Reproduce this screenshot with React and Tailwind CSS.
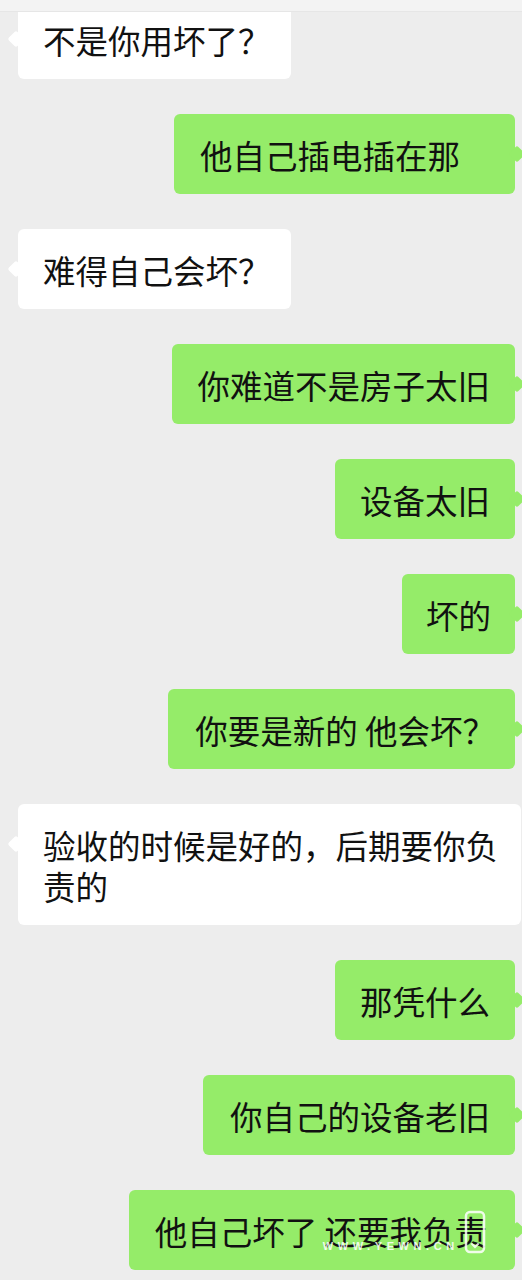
import React from 'react'

const MESSAGES = [
  { side: 'left', text: '不是你用坏了？', pad: 'pl-[25px] pr-[20px]' },
  { side: 'right', text: '他自己插电插在那', pad: 'pl-[26px] pr-[55px]' },
  { side: 'left', text: '难得自己会坏？', pad: 'pl-[25px] pr-[20px]' },
  { side: 'right', text: '你难道不是房子太旧', pad: 'px-[25px]' },
  { side: 'right', text: '设备太旧', pad: 'px-[25px]' },
  { side: 'right', text: '坏的', pad: 'px-[24px]' },
  { side: 'right', text: '你要是新的 他会坏？', pad: 'pl-[27px] pr-[20px]' },
  { side: 'left', text: '验收的时候是好的，后期要你负责的', pad: 'pl-[25px] pr-[16px]' },
  { side: 'right', text: '那凭什么', pad: 'px-[25px]' },
  { side: 'right', text: '你自己的设备老旧', pad: 'pl-[27px] pr-[25px]' },
  { side: 'right', text: '他自己坏了 还要我负责', pad: 'pl-[26px] pr-[28px]', mark: true },
]

function Bubble({ msg }) {
  const mine = msg.side === 'right'
  return (
    <div className={mine ? 'flex justify-end pr-[7px]' : 'flex justify-start pl-[18px] pr-px'}>
      <div
        className={`relative rounded-[6px] py-[19.5px] text-[32.5px] leading-[41px] text-[#111] ${
          mine ? 'bg-[#95ec69]' : 'bg-white'
        } ${msg.pad}`}
      >
        {/* tail */}
        <span
          className={`absolute top-[34px] h-[12px] w-[12px] rotate-45 rounded-[2px] ${
            mine ? '-right-[8px] bg-[#95ec69]' : '-left-[8px] bg-white'
          }`}
        />
        <span className="relative">{msg.text}</span>

        {/* site watermark */}
        {msg.mark && (
          <div className="absolute left-[194px] top-[20px] flex items-end gap-[5px] text-white/85">
            <span className="mb-[2px] text-[11px] font-bold leading-none tracking-[4.6px] [font-family:'Liberation_Sans',sans-serif]">
              WWW.YEWN.CN
            </span>
            <svg width="22" height="44" viewBox="0 0 22 44" fill="none">
              <rect x="2" y="2" width="18" height="40" rx="4" stroke="currentColor" strokeWidth="2.5" />
              <path d="M8 34l3 3 3-3" stroke="currentColor" strokeWidth="2" strokeLinecap="round" />
            </svg>
          </div>
        )}
      </div>
    </div>
  )
}

export default function App() {
  return (
    <div className="relative h-[1280px] w-[522px] overflow-hidden bg-[#ededed] [font-family:'Noto_Sans_CJK_SC','Noto_Sans',sans-serif]">
      {/* top strip */}
      <div className="absolute inset-x-0 top-0 z-10 h-[12px] border-b border-[#e6e6e6] bg-[#f3f3f3]" />

      <div className="-mt-px flex flex-col gap-[35px]">
        {MESSAGES.map((m, i) => (
          <Bubble key={i} msg={m} />
        ))}
      </div>
    </div>
  )
}
